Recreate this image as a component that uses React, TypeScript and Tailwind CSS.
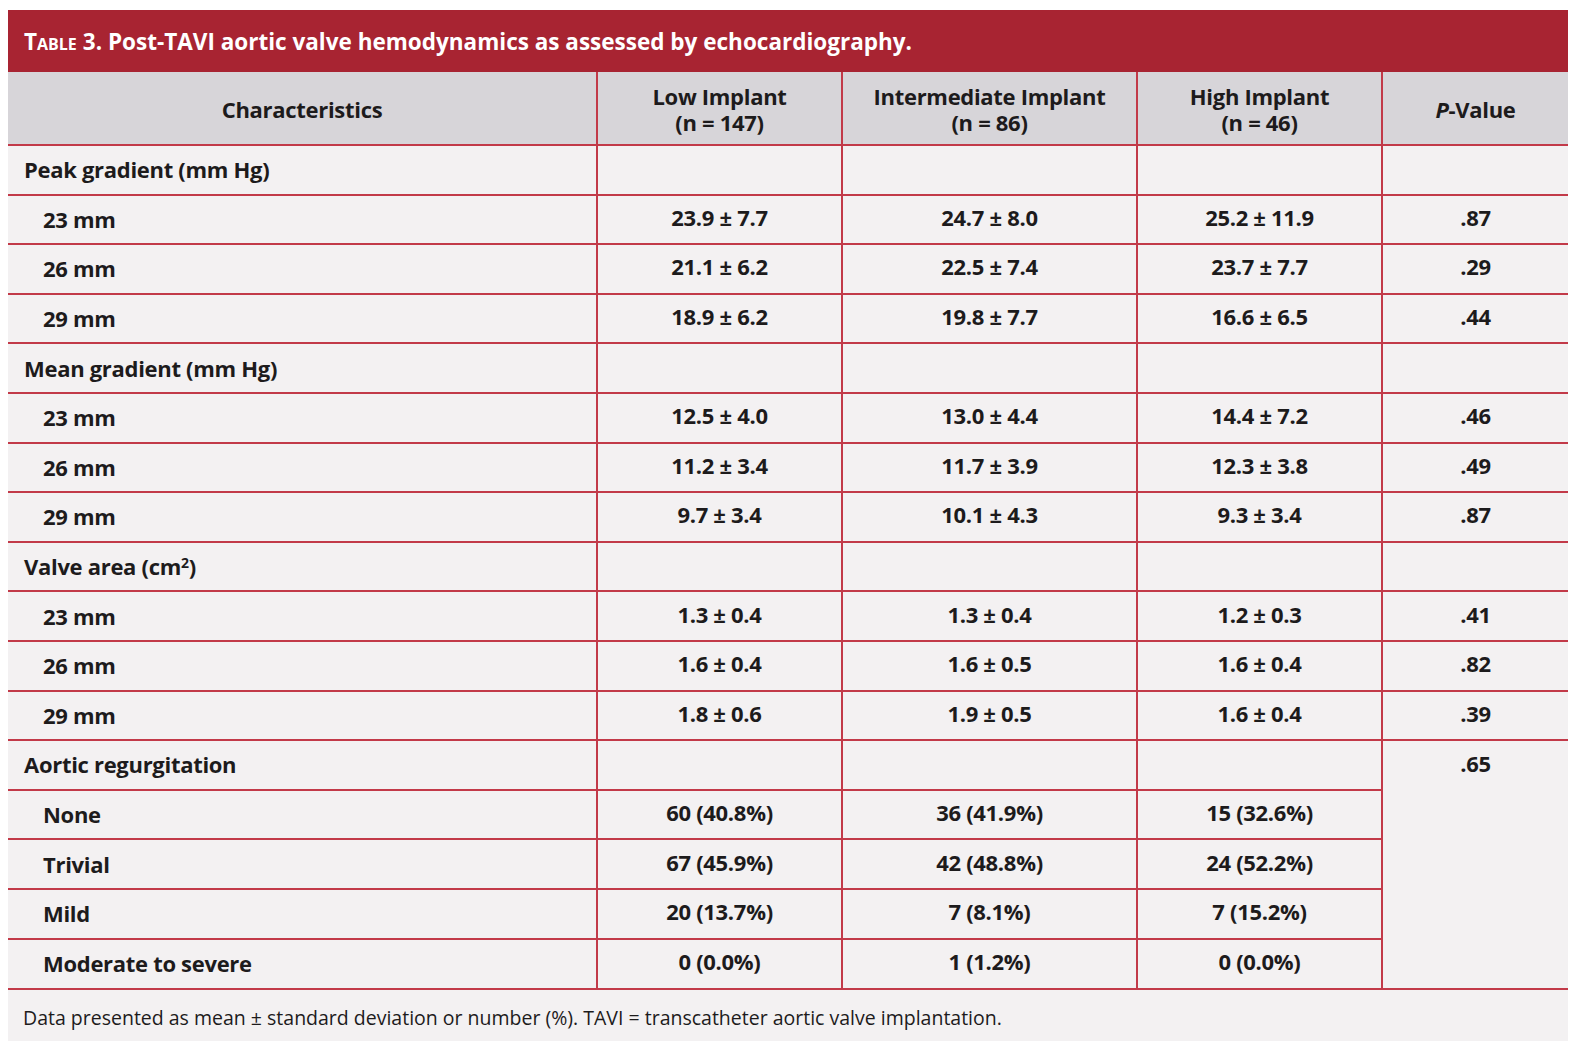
import React from "react";

type Row = {
  label: React.ReactNode;
  sub?: boolean;
  low?: string;
  mid?: string;
  high?: string;
  p?: string;
  pSpan?: number;
  skipP?: boolean;
};

const rows: Row[] = [
  { label: "Peak gradient (mm Hg)", p: "" },
  { label: "23 mm", sub: true, low: "23.9 ± 7.7", mid: "24.7 ± 8.0", high: "25.2 ± 11.9", p: ".87" },
  { label: "26 mm", sub: true, low: "21.1 ± 6.2", mid: "22.5 ± 7.4", high: "23.7 ± 7.7", p: ".29" },
  { label: "29 mm", sub: true, low: "18.9 ± 6.2", mid: "19.8 ± 7.7", high: "16.6 ± 6.5", p: ".44" },
  { label: "Mean gradient (mm Hg)", p: "" },
  { label: "23 mm", sub: true, low: "12.5 ± 4.0", mid: "13.0 ± 4.4", high: "14.4 ± 7.2", p: ".46" },
  { label: "26 mm", sub: true, low: "11.2 ± 3.4", mid: "11.7 ± 3.9", high: "12.3 ± 3.8", p: ".49" },
  { label: "29 mm", sub: true, low: "9.7 ± 3.4", mid: "10.1 ± 4.3", high: "9.3 ± 3.4", p: ".87" },
  {
    label: (
      <>
        Valve area (cm<sup className="text-[14px]">2</sup>)
      </>
    ),
    p: "",
  },
  { label: "23 mm", sub: true, low: "1.3 ± 0.4", mid: "1.3 ± 0.4", high: "1.2 ± 0.3", p: ".41" },
  { label: "26 mm", sub: true, low: "1.6 ± 0.4", mid: "1.6 ± 0.5", high: "1.6 ± 0.4", p: ".82" },
  { label: "29 mm", sub: true, low: "1.8 ± 0.6", mid: "1.9 ± 0.5", high: "1.6 ± 0.4", p: ".39" },
  { label: "Aortic regurgitation", p: ".65", pSpan: 5 },
  { label: "None", sub: true, low: "60 (40.8%)", mid: "36 (41.9%)", high: "15 (32.6%)", skipP: true },
  { label: "Trivial", sub: true, low: "67 (45.9%)", mid: "42 (48.8%)", high: "24 (52.2%)", skipP: true },
  { label: "Mild", sub: true, low: "20 (13.7%)", mid: "7 (8.1%)", high: "7 (15.2%)", skipP: true },
  { label: "Moderate to severe", sub: true, low: "0 (0.0%)", mid: "1 (1.2%)", high: "0 (0.0%)", skipP: true },
];

const line = "border-2 border-[#c23a49]";
const head = `${line} text-center align-middle pt-[1px]`;
const cell = `${line} text-center align-middle pb-[5px]`;

function Two({ a, b }: { a: string; b: string }) {
  return (
    <>
      <div className="h-[26px] leading-[26px]">{a}</div>
      <div className="h-[26px] leading-[26px]">{b}</div>
    </>
  );
}

export default function App() {
  return (
    <div className="min-h-screen bg-white pt-[10px] pl-[8px]" style={{ fontFamily: "'Open Sans', 'Noto Sans', sans-serif" }}>
      <div className="w-[1560px] bg-[#f3f1f2] text-[#1d1b1c]">
        <div className="h-[62px] bg-[#a82432] flex items-center pl-[16px] pt-[1px] text-white font-bold text-[22.5px]">
          <span className="[font-variant-caps:small-caps] mr-[6px]">Table</span>
          3. Post-TAVI aortic valve hemodynamics as assessed by echocardiography.
        </div>
        <table className="w-full table-fixed border-collapse border-hidden font-bold text-[22px] tracking-[-0.3px]">
          <colgroup>
            <col className="w-[589px]" />
            <col className="w-[245px]" />
            <col className="w-[295px]" />
            <col className="w-[245px]" />
            <col />
          </colgroup>
          <thead>
            <tr className="h-[73px] bg-[#d7d5d9] leading-[26px]">
              <th className={head}>Characteristics</th>
              <th className={head}>
                <Two a="Low Implant" b="(n = 147)" />
              </th>
              <th className={head}>
                <Two a="Intermediate Implant" b="(n = 86)" />
              </th>
              <th className={head}>
                <Two a="High Implant" b="(n = 46)" />
              </th>
              <th className={head}>
                <i>P</i>-Value
              </th>
            </tr>
          </thead>
          <tbody>
            {rows.map((r, i) => (
              <tr key={i} className="h-[49.6px] leading-[26px]">
                <td className={`${line} text-left align-middle pb-[1px] ${r.sub ? "pl-[35px]" : "pl-[16px]"}`}>
                  {r.label}
                </td>
                <td className={cell}>{r.low}</td>
                <td className={cell}>{r.mid}</td>
                <td className={cell}>{r.high}</td>
                {!r.skipP && (
                  <td
                    rowSpan={r.pSpan}
                    className={r.pSpan ? `${line} text-center align-top pt-[9px]` : cell}
                  >
                    {r.p}
                  </td>
                )}
              </tr>
            ))}
          </tbody>
        </table>
        <div className="h-[53px] flex items-center pl-[15px] pt-[4px] text-[19.5px] font-normal border-t-2 border-[#c23a49]">
          Data presented as mean ± standard deviation or number (%). TAVI = transcatheter aortic valve implantation.
        </div>
      </div>
    </div>
  );
}
